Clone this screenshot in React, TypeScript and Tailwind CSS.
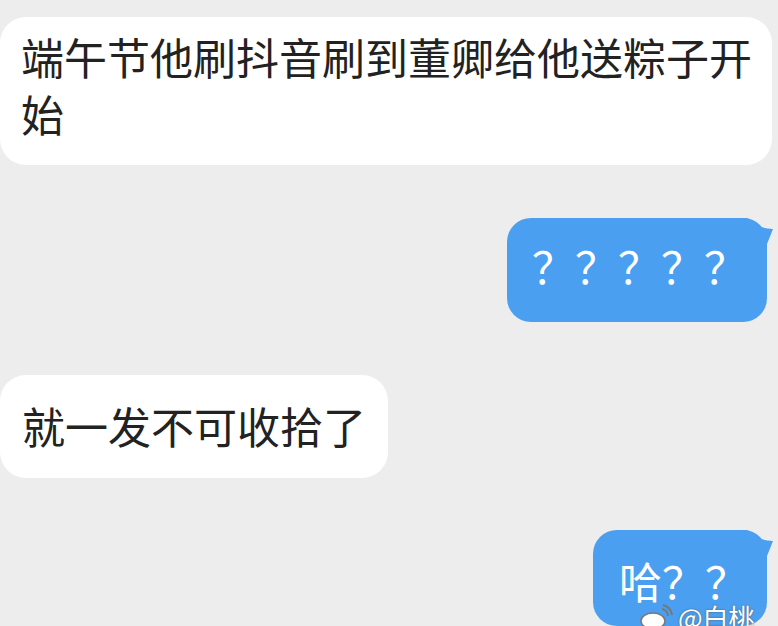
const font = "font-['Noto_Sans_CJK_SC','Noto_Sans',sans-serif]";

function Tail() {
  return (
    <svg
      className="absolute right-[-10px] top-0"
      width="40"
      height="42"
      viewBox="0 0 40 42"
    >
      <path
        d="M0 0 L8 0 C15 0 19 8 24 9 C28 10 32 11 36 11 L26 36 L26 42 L0 42 Z"
        fill="#4a9ff0"
      />
    </svg>
  );
}

export default function App() {
  return (
    <div
      className={`relative w-[778px] h-[626px] overflow-hidden bg-[#ededed] flex flex-col pt-[17px] ${font}`}
    >
      {/* 白色气泡 */}
      <div className="w-[772px] bg-white rounded-[26px] pl-[21px] pr-[10px] pt-[11px] pb-[23px] text-[43px] leading-[57px] text-[#222]">
        端午节他刷抖音刷到董卿给他送粽子开始
      </div>

      {/* 蓝色气泡 */}
      <div className="relative ml-auto mr-[11px] mt-[53px] w-[260px] bg-[#4a9ff0] rounded-[24px] pl-[25px] pt-[19px] pb-[28px] text-[43px] leading-[57px] text-white">
        <Tail />
        <span className="relative">？？？？？</span>
      </div>

      <div className="mt-[53px] w-[388px] bg-white rounded-[26px] pl-[22px] pt-[22px] pb-[24px] text-[43px] leading-[57px] text-[#222]">
        就一发不可收拾了
      </div>

      <div className="relative ml-auto mr-[11px] mt-[52px] w-[174px] h-[120px] bg-[#4a9ff0] rounded-[24px] pl-[26px] pt-[22px] text-[43px] leading-[57px] text-white">
        <Tail />
        <span className="relative">哈？？</span>
      </div>

      {/* 水印 */}
      <div className="absolute left-[640px] top-[604px] flex items-center gap-1">
        <svg width="34" height="26" viewBox="0 0 34 26">
          <ellipse cx="13" cy="17" rx="12" ry="8" fill="#fff" stroke="#777" strokeWidth="1.5" />
          <path d="M22 5 A7 7 0 0 1 28 12" fill="none" stroke="#777" strokeWidth="2" />
          <path d="M23 1 A12 12 0 0 1 32 11" fill="none" stroke="#777" strokeWidth="2" />
        </svg>
        <span className="text-[26px] leading-none text-white [text-shadow:0_0_2px_#555]">
          @白桃
        </span>
      </div>
    </div>
  );
}
